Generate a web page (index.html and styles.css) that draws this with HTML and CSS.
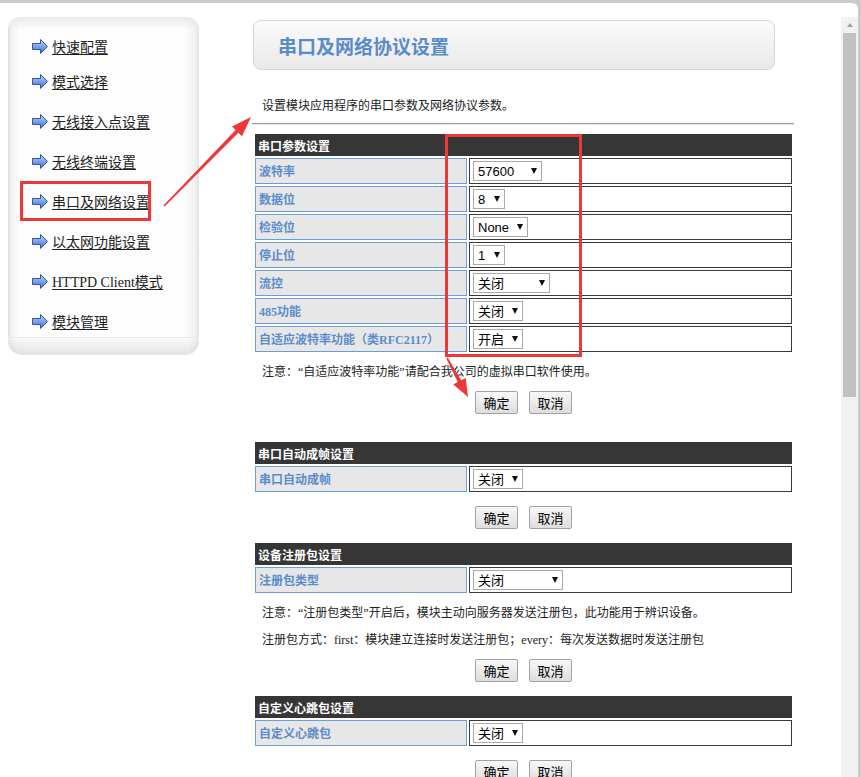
FILE: index.html
```html
<!DOCTYPE html>
<html lang="zh-CN">
<head>
<meta charset="utf-8">
<title>串口及网络协议设置</title>
<link rel="stylesheet" href="styles.css">
</head>
<body>
<svg class="defs" width="0" height="0" aria-hidden="true">
  <defs>
    <linearGradient id="arrowFill" x1="0" y1="0" x2="0" y2="1">
      <stop offset="0" stop-color="#c3d6f7"/>
      <stop offset="0.5" stop-color="#7ea2e6"/>
      <stop offset="1" stop-color="#3f6fcb"/>
    </linearGradient>
    <symbol id="navArrow" viewBox="0 0 16 15">
      <polygon points="0.5,4.5 8.5,4.5 8.5,0.5 15.5,7.5 8.5,14.5 8.5,10.5 0.5,10.5" fill="url(#arrowFill)" stroke="#2d58ad" stroke-width="1"/>
    </symbol>
  </defs>
</svg>
<div class="window">
  <div class="chrome"></div>
  <div class="viewport">
    <div class="page">
      <nav class="sidebar">
        <ul class="menu">
          <li><svg class="ico"><use href="#navArrow"/></svg><a href="#">快速配置</a></li>
          <li><svg class="ico"><use href="#navArrow"/></svg><a href="#">模式选择</a></li>
          <li><svg class="ico"><use href="#navArrow"/></svg><a href="#">无线接入点设置</a></li>
          <li><svg class="ico"><use href="#navArrow"/></svg><a href="#">无线终端设置</a></li>
          <li><svg class="ico"><use href="#navArrow"/></svg><a href="#">串口及网络设置</a></li>
          <li><svg class="ico"><use href="#navArrow"/></svg><a href="#">以太网功能设置</a></li>
          <li><svg class="ico"><use href="#navArrow"/></svg><a href="#">HTTPD Client模式</a></li>
          <li><svg class="ico"><use href="#navArrow"/></svg><a href="#">模块管理</a></li>
        </ul>
        <div class="sidebar-foot"></div>
      </nav>

      <main class="main">
        <div class="title-panel"><h1>串口及网络协议设置</h1></div>
        <p class="desc">设置模块应用程序的串口参数及网络协议参数。</p>
        <hr class="rule">

        <section class="section sec-first">
          <table class="form">
            <tr><th colspan="2">串口参数设置</th></tr>
            <tr><td class="lbl">波特率</td><td class="val"><span class="sel w69"><select><option>57600</option></select></span></td></tr>
            <tr><td class="lbl">数据位</td><td class="val"><span class="sel w32"><select><option>8</option></select></span></td></tr>
            <tr><td class="lbl">检验位</td><td class="val"><span class="sel w55"><select><option>None</option></select></span></td></tr>
            <tr><td class="lbl">停止位</td><td class="val"><span class="sel w32"><select><option>1</option></select></span></td></tr>
            <tr><td class="lbl">流控</td><td class="val"><span class="sel w77"><select><option>关闭</option></select></span></td></tr>
            <tr><td class="lbl">485功能</td><td class="val"><span class="sel w50"><select><option>关闭</option></select></span></td></tr>
            <tr><td class="lbl">自适应波特率功能（类RFC2117）</td><td class="val"><span class="sel w50"><select><option>开启</option></select></span></td></tr>
          </table>
          <div class="notes">
            <p>注意：“自适应波特率功能”请配合我公司的虚拟串口软件使用。</p>
          </div>
          <div class="btns"><button class="btn">确定</button><button class="btn">取消</button></div>
        </section>

        <section class="section">
          <table class="form">
            <tr><th colspan="2">串口自动成帧设置</th></tr>
            <tr><td class="lbl">串口自动成帧</td><td class="val"><span class="sel w50"><select><option>关闭</option></select></span></td></tr>
          </table>
          <div class="btns"><button class="btn">确定</button><button class="btn">取消</button></div>
        </section>

        <section class="section">
          <table class="form">
            <tr><th colspan="2">设备注册包设置</th></tr>
            <tr><td class="lbl">注册包类型</td><td class="val"><span class="sel w90"><select><option>关闭</option></select></span></td></tr>
          </table>
          <div class="notes">
            <p>注意：“注册包类型”开启后，模块主动向服务器发送注册包，此功能用于辨识设备。</p>
            <p>注册包方式：first：模块建立连接时发送注册包；every：每次发送数据时发送注册包</p>
          </div>
          <div class="btns"><button class="btn">确定</button><button class="btn">取消</button></div>
        </section>

        <section class="section">
          <table class="form">
            <tr><th colspan="2">自定义心跳包设置</th></tr>
            <tr><td class="lbl">自定义心跳包</td><td class="val"><span class="sel w50"><select><option>关闭</option></select></span></td></tr>
          </table>
          <div class="btns"><button class="btn">确定</button><button class="btn">取消</button></div>
        </section>
      </main>
    </div>
    <div class="scrollbar"><span class="sb-up"></span><span class="sb-thumb"></span></div>
  </div>
</div>

<svg class="annot" width="861" height="777" viewBox="0 0 861 777" aria-hidden="true">
  <g fill="none" stroke="#ee3838" stroke-width="3">
    <rect x="21.5" y="182.5" width="128" height="37"/>
    <rect x="446.5" y="135.5" width="134" height="220"/>
  </g>
  <g fill="#ee3838">
    <polygon points="163.4,205.4 235.6,129.9 232,126.4 251,117 242,136.2 238.4,132.7 164.6,206.6"/>
    <polygon points="446.3,358.4 457.7,382.1 453.3,384.5 468,397 465.7,377.9 461.3,380.3 447.7,357.6"/>
  </g>
</svg>
</body>
</html>
```

FILE: styles.css
```css
* { box-sizing: border-box; }

html, body {
  margin: 0;
  padding: 0;
}

body {
  position: relative;
  width: 861px;
  height: 777px;
  overflow: hidden;
  padding: 3px 3px 0 0;
  background: #cbcbcb;
  font: 12px "Liberation Serif", "Noto Sans CJK SC", serif;
  color: #222;
}

.defs {
  position: absolute;
  width: 0;
  height: 0;
  overflow: hidden;
}

.window {
  height: 774px;
  background: #fff;
  border-top-right-radius: 6px;
  overflow: hidden;
  display: flex;
  flex-direction: column;
}

.chrome {
  height: 14px;
  flex: none;
}

.viewport {
  flex: 1;
  display: flex;
  min-height: 0;
}

.page {
  flex: 1;
  display: flex;
  align-items: flex-start;
  overflow: hidden;
}

/* ---------- sidebar ---------- */
.sidebar {
  flex: none;
  width: 191px;
  margin-left: 8px;
  display: flex;
  flex-direction: column;
}

.menu {
  list-style: none;
  margin: 0;
  padding: 14px 0 0 24px;
  height: 320px;
  border-radius: 12px 12px 0 0;
  background:
    linear-gradient(to bottom, #e9e9e9 0, rgba(255,255,255,0) 12px),
    linear-gradient(to right, #dcdcdc 0, #f1f1f1 3px, #fdfdfd 12px, #fdfdfd 176px, #f2f2f2 187px, #e1e1e1 191px);
}

.menu li {
  display: flex;
  align-items: center;
  height: 40px;
}

.menu li:first-child {
  height: 30px;
}

.ico {
  width: 16px;
  height: 15px;
  margin-right: 4px;
  flex: none;
}

.menu a {
  font-size: 14px;
  color: #222;
  text-decoration: underline;
  text-underline-offset: 2px;
}

.sidebar-foot {
  height: 18px;
  border-top: 1px solid #e8e8e8;
  border-radius: 0 0 14px 14px;
  background:
    linear-gradient(to right, rgba(0,0,0,0.06) 0, rgba(0,0,0,0) 10px, rgba(0,0,0,0) 181px, rgba(0,0,0,0.06) 191px),
    linear-gradient(to bottom, #f9f9f9, #e2e2e2);
}

/* ---------- main ---------- */
.main {
  flex: none;
  width: 542px;
  margin-left: 53px;
  padding-top: 3px;
}

.title-panel {
  width: 522px;
  height: 50px;
  margin-left: 1px;
  border: 1px solid #d6d6d6;
  border-radius: 8px;
  background: linear-gradient(to bottom, #fbfbfb, #e9e9e9);
  display: flex;
  align-items: center;
  padding-left: 24px;
}

.title-panel h1 {
  margin: 0;
  font: bold 19px "Noto Sans CJK SC", sans-serif;
  color: #5b8bc8;
  line-height: 1;
}

.desc {
  margin: 26px 0 0;
  padding-left: 10px;
  line-height: 20px;
  font-size: 12px;
}

.rule {
  margin: 7px 0 0;
  height: 0;
  border: 0;
  border-top: 1px solid #9c9c9c;
  border-bottom: 1px solid #e6e6e6;
}

.section {
  margin-bottom: 12px;
}

.sec-first {
  margin-top: 7px;
  margin-bottom: 26px;
}

.form {
  width: 541px;
  margin-left: 1px;
  border-collapse: separate;
  border-spacing: 2px;
}

.form th {
  height: 22px;
  padding: 0 0 0 3px;
  background: #363636;
  color: #fff;
  font: bold 12px "Noto Sans CJK SC", sans-serif;
  text-align: left;
}

.form td {
  height: 26px;
  padding: 0 3px;
  vertical-align: middle;
}

.form .lbl {
  width: 212px;
  background: #e7e7e7;
  border: 1px solid #6a9ed8;
  color: #5b8ccb;
  font: bold 12px "Liberation Serif", "Noto Sans CJK SC", serif;
  white-space: nowrap;
}

.form .val {
  background: #fff;
  border: 1px solid #3a3a3a;
}

.sel {
  position: relative;
  display: inline-block;
  vertical-align: middle;
}

.sel select {
  -webkit-appearance: none;
  appearance: none;
  display: block;
  width: 100%;
  height: 20px;
  margin: 0;
  padding: 0 0 0 4px;
  border: 1px solid #a9a9a9;
  border-radius: 0;
  background: #fff;
  color: #000;
  font: 13px "Liberation Sans", "Noto Sans CJK SC", sans-serif;
}

.sel::after {
  content: "";
  position: absolute;
  right: 5px;
  top: 7px;
  border-left: 3.5px solid transparent;
  border-right: 3.5px solid transparent;
  border-top: 6px solid #111;
  pointer-events: none;
}

.w32 { width: 32px; }
.w50 { width: 50px; }
.w55 { width: 55px; }
.w69 { width: 69px; }
.w77 { width: 77px; }
.w90 { width: 90px; }

.notes {
  padding: 5px 0 0 10px;
}

.notes p {
  margin: 0;
  line-height: 27px;
  font-size: 12px;
}

.btns {
  width: 541px;
  margin-left: 1px;
  margin-top: 12px;
  display: flex;
  justify-content: center;
  gap: 11px;
}

.notes + .btns {
  margin-top: 5px;
}

.btn {
  width: 43px;
  height: 23px;
  padding: 0;
  border: 1px solid #a2a2a2;
  border-radius: 2px;
  background: linear-gradient(to bottom, #f8f8f8, #dddddd);
  color: #000;
  font: 13px "Noto Sans CJK SC", sans-serif;
}

/* ---------- scrollbar ---------- */
.scrollbar {
  flex: none;
  width: 17px;
  background: #f1f1f1;
  display: flex;
  flex-direction: column;
  align-items: center;
}

.sb-up {
  margin-top: 6px;
  width: 0;
  height: 0;
  border-left: 3.5px solid transparent;
  border-right: 3.5px solid transparent;
  border-bottom: 4px solid #a3a3a3;
}

.sb-thumb {
  margin-top: 6px;
  width: 13px;
  height: 364px;
  background: #c1c1c1;
}

/* ---------- annotations drawn over the page ---------- */
.annot {
  position: absolute;
  left: 0;
  top: 0;
  pointer-events: none;
}
```
